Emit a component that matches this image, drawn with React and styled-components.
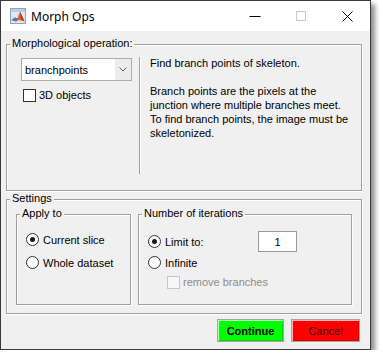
import React from 'react';
import styled, { createGlobalStyle } from 'styled-components';

const GlobalStyle = createGlobalStyle`
  html, body { margin: 0; padding: 0; background: #fff; }
  body {
    font-family: "Liberation Sans", Arial, sans-serif;
    font-size: 11px;
    color: #000;
  }
  * { box-sizing: border-box; }
`;

const Window = styled.div`
  width: 371px;
  height: 350px;
  border: 1px solid #3a3a3a;
  box-shadow: 4px 4px 5px rgba(0, 0, 0, 0.45);
  display: flex;
  flex-direction: column;
  background: #f0f0f0;
`;

const TitleBar = styled.div`
  height: 30px;
  flex-shrink: 0;
  background: #fff;
  display: flex;
  align-items: center;
`;

const AppIcon = styled.svg`
  margin-left: 9px;
  width: 16px;
  height: 16px;
  flex-shrink: 0;
`;

const Title = styled.span`
  margin-left: 5px;
  flex: 1;
  font-family: "Noto Sans", "Liberation Sans", sans-serif;
  font-size: 12px;
  color: #000;
`;

const Caption = styled.div`
  width: 46px;
  height: 30px;
  display: flex;
  align-items: center;
  justify-content: center;
`;

const Body = styled.div`
  flex: 1;
  padding: 13px 0 0 5px;
  display: flex;
  flex-direction: column;
`;

const Group = styled.div`
  position: relative;
  width: ${(p) => p.$w}px;
  height: ${(p) => p.$h}px;
  flex-shrink: 0;
  border: 1px solid #a0a0a0;
  box-shadow: inset 1px 1px 0 #fff, 1px 1px 0 #fff;
  margin-top: ${(p) => p.$mt || 0}px;
`;

const Legend = styled.span`
  position: absolute;
  top: -8px;
  left: 3px;
  padding: 0 2px;
  line-height: 13px;
  background: #f0f0f0;
  white-space: nowrap;
`;

const OpContent = styled.div`
  display: flex;
  align-items: flex-start;
  padding: 13px 0 0 14px;
`;

const LeftCol = styled.div`
  width: 111px;
  display: flex;
  flex-direction: column;
`;

const Select = styled.div`
  height: 23px;
  border: 1px solid #acacac;
  background: #fff;
  display: flex;
  align-items: stretch;
`;

const SelectText = styled.span`
  flex: 1;
  padding-left: 3px;
  display: flex;
  align-items: center;
`;

const SelectArrow = styled.span`
  width: 16px;
  background: #ececec;
  display: flex;
  align-items: center;
  justify-content: center;
`;

const CheckRow = styled.label`
  display: flex;
  align-items: center;
  gap: 3px;
  margin: ${(p) => p.$m || '0'};
  color: ${(p) => (p.$disabled ? '#8d8d8d' : '#000')};
  line-height: 13px;
`;

const Box = styled.span`
  width: 13px;
  height: 13px;
  flex-shrink: 0;
  border: 1px solid ${(p) => (p.$disabled ? '#c6c6c6' : '#333')};
  background: ${(p) => (p.$disabled ? '#f7f7f7' : '#fff')};
`;

const Separator = styled.div`
  width: 2px;
  height: 117px;
  margin: -1px 0 0 7px;
  border-left: 1px solid #a0a0a0;
  border-right: 1px solid #fff;
`;

const Desc = styled.div`
  margin: -2px 0 0 9px;
  line-height: 14px;
  white-space: nowrap;
`;

const SettingsRow = styled.div`
  display: flex;
  gap: 7px;
  padding: 14px 9px 0 9px;
`;

const FrameContent = styled.div`
  display: flex;
  flex-direction: column;
  padding: ${(p) => p.$pad};
  gap: ${(p) => p.$gap || 0}px;
`;

const RadioRow = styled.label`
  display: flex;
  align-items: center;
  gap: 4px;
  height: ${(p) => p.$h || 13}px;
  margin-top: ${(p) => p.$mt || 0}px;
`;

const Radio = styled.span`
  width: 13px;
  height: 13px;
  flex-shrink: 0;
  border-radius: 50%;
  border: 1px solid #333;
  background: #fff;
  display: flex;
  align-items: center;
  justify-content: center;
  &::after {
    content: '';
    width: 5px;
    height: 5px;
    border-radius: 50%;
    background: ${(p) => (p.$checked ? '#1a1a1a' : 'transparent')};
  }
`;

const LimitLabel = styled.span`
  width: 89px;
`;

const Edit = styled.div`
  width: 39px;
  height: 21px;
  border: 1px solid #9a9a9a;
  background: #fff;
  display: flex;
  align-items: center;
  justify-content: center;
`;

const ButtonRow = styled.div`
  display: flex;
  justify-content: flex-end;
  gap: 7px;
  margin-top: 5px;
  padding-right: 10px;
`;

const Button = styled.button`
  width: ${(p) => p.$w}px;
  height: 23px;
  padding: 0;
  font-family: "Liberation Sans", Arial, sans-serif;
  font-size: 11px;
  font-weight: ${(p) => (p.$bold ? 700 : 400)};
  color: ${(p) => p.$fg || '#000'};
  background: ${(p) => p.$bg};
  border: 1px solid #a3a3a3;
  box-shadow: inset 1px 1px 0 rgba(255, 255, 255, 0.7), inset -1px -1px 0 rgba(0, 0, 0, 0.15);
`;

function MatlabIcon() {
  return (
    <AppIcon viewBox="0 0 16 16">
      <rect x="0.5" y="0.5" width="15" height="15" fill="#dfe8f2" stroke="#8ea3bd" />
      <rect x="1" y="1" width="14" height="3" fill="#b9cde4" />
      <polygon points="1.5,12 5,9.5 7.5,10.5 10,3.5 12.5,9 14.5,13.5 9,12 6,13.5" fill="#e0622a" />
      <polygon points="10,3.5 12.5,9 14.5,13.5 11,11" fill="#b8321a" />
      <polygon points="1.5,12 5,9.5 7.5,10.5 6,13.5" fill="#3f7fc0" />
    </AppIcon>
  );
}

export default function App() {
  return (
    <>
      <GlobalStyle />
      <Window>
        <TitleBar>
          <MatlabIcon />
          <Title>Morph Ops</Title>
          <Caption>
            <svg width="12" height="12" viewBox="0 0 12 12">
              <line x1="0.5" y1="6.5" x2="11.5" y2="6.5" stroke="#000" />
            </svg>
          </Caption>
          <Caption>
            <svg width="10" height="10" viewBox="0 0 10 10">
              <rect x="0.5" y="0.5" width="9" height="9" fill="none" stroke="#c8c8c8" />
            </svg>
          </Caption>
          <Caption>
            <svg width="11" height="11" viewBox="0 0 11 11">
              <path d="M0.5 0.5 L10.5 10.5 M10.5 0.5 L0.5 10.5" stroke="#000" strokeWidth="1" />
            </svg>
          </Caption>
        </TitleBar>
        <Body>
          <Group $w={356} $h={147}>
            <Legend>Morphological operation:</Legend>
            <OpContent>
              <LeftCol>
                <Select>
                  <SelectText>branchpoints</SelectText>
                  <SelectArrow>
                    <svg width="8" height="5" viewBox="0 0 8 5">
                      <path d="M0.5 0.5 L4 4 L7.5 0.5" fill="none" stroke="#606060" />
                    </svg>
                  </SelectArrow>
                </Select>
                <CheckRow $m="8px 0 0 2px">
                  <Box />
                  <span>3D objects</span>
                </CheckRow>
              </LeftCol>
              <Separator />
              <Desc>
                Find branch points of skeleton.
                <br />
                <br />
                Branch points are the pixels at the
                <br />
                junction where multiple branches meet.
                <br />
                To find branch points, the image must be
                <br />
                skeletonized.
              </Desc>
            </OpContent>
          </Group>
          <Group $w={356} $h={115} $mt={8}>
            <Legend>Settings</Legend>
            <SettingsRow>
              <Group $w={115} $h={91}>
                <Legend>Apply to</Legend>
                <FrameContent $pad="18px 0 0 9px" $gap={10}>
                  <RadioRow>
                    <Radio $checked />
                    <span>Current slice</span>
                  </RadioRow>
                  <RadioRow>
                    <Radio />
                    <span>Whole dataset</span>
                  </RadioRow>
                </FrameContent>
              </Group>
              <Group $w={214} $h={91}>
                <Legend>Number of iterations</Legend>
                <FrameContent $pad="16px 0 0 9px">
                  <RadioRow $h={21}>
                    <Radio $checked />
                    <LimitLabel>Limit to:</LimitLabel>
                    <Edit>1</Edit>
                  </RadioRow>
                  <RadioRow $mt={4}>
                    <Radio />
                    <span>Infinite</span>
                  </RadioRow>
                  <CheckRow $m="7px 0 0 19px" $disabled>
                    <Box $disabled />
                    <span>remove branches</span>
                  </CheckRow>
                </FrameContent>
              </Group>
            </SettingsRow>
          </Group>
          <ButtonRow>
            <Button $w={67} $bg="#00ff00" $bold>Continue</Button>
            <Button $w={69} $bg="#ff0000" $fg="#2a0000">Cancel</Button>
          </ButtonRow>
        </Body>
      </Window>
    </>
  );
}
